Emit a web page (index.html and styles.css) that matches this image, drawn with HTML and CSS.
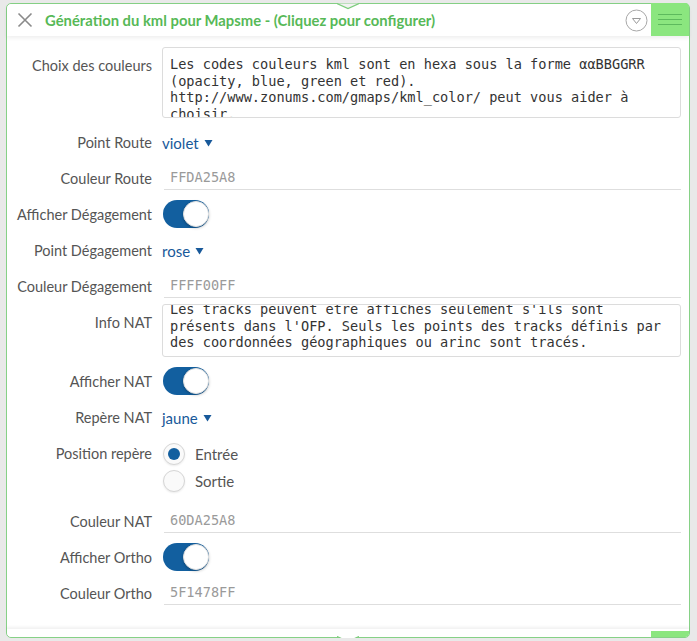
FILE: index.html
```html
<!DOCTYPE html>
<html lang="fr">
<head>
<meta charset="utf-8">
<title>Génération du kml pour Mapsme</title>
<link rel="stylesheet" href="styles.css">
</head>
<body>
<div class="panel">
  <svg class="notch notch-top" width="22" height="10" viewBox="0 0 22 10"><path d="M0 3.5 L11 8.5 L22 3.5" fill="#f2f2f2" stroke="#7ccc7c" stroke-width="1.3"/></svg>
  <header class="head">
    <svg class="close" width="16" height="16" viewBox="0 0 16 16"><path d="M1.5 1.5 L14.5 14.5 M14.5 1.5 L1.5 14.5" stroke="#8a8a8a" stroke-width="1.6" fill="none"/></svg>
    <span class="title">Génération du kml pour Mapsme - (Cliquez pour configurer)</span>
    <svg class="collapse" width="23" height="23" viewBox="0 0 23 23"><circle cx="11.5" cy="11.5" r="10.5" fill="#fff" stroke="#a8a8a8" stroke-width="1"/><path d="M7.5 9.5 L15.5 9.5 L11.5 14.5 Z" fill="none" stroke="#9a9a9a" stroke-width="1"/></svg>
    <div class="menu"><span class="bar"></span><span class="bar"></span><span class="bar"></span></div>
  </header>
  <div class="body">
    <div class="row row-area">
      <div class="label">Choix des couleurs</div>
      <div class="area area-big"><div class="area-text">Les codes couleurs kml sont en hexa sous la forme ααBBGGRR
(opacity, blue, green et red).
http://www.zonums.com/gmaps/kml_color/ peut vous aider à
choisir.</div></div>
    </div>
    <div class="row">
      <div class="label">Point Route</div>
      <div class="select">violet<svg class="caret" width="9" height="8" viewBox="0 0 9 8"><path d="M0.5 1 L8.5 1 L4.5 7.5 Z" fill="#18599a"/></svg></div>
    </div>
    <div class="row">
      <div class="label">Couleur Route</div>
      <div class="input">FFDA25A8</div>
    </div>
    <div class="row">
      <div class="label">Afficher Dégagement</div>
      <div class="toggle"><span class="knob"></span></div>
    </div>
    <div class="row">
      <div class="label">Point Dégagement</div>
      <div class="select">rose<svg class="caret" width="9" height="8" viewBox="0 0 9 8"><path d="M0.5 1 L8.5 1 L4.5 7.5 Z" fill="#18599a"/></svg></div>
    </div>
    <div class="row">
      <div class="label">Couleur Dégagement</div>
      <div class="input">FFFF00FF</div>
    </div>
    <div class="row row-area">
      <div class="label">Info NAT</div>
      <div class="area area-small"><div class="area-text scrolled">Les tracks peuvent être affichés seulement s'ils sont
présents dans l'OFP. Seuls les points des tracks définis par
des coordonnées géographiques ou arinc sont tracés.</div></div>
    </div>
    <div class="row">
      <div class="label">Afficher NAT</div>
      <div class="toggle"><span class="knob"></span></div>
    </div>
    <div class="row">
      <div class="label">Repère NAT</div>
      <div class="select">jaune<svg class="caret" width="9" height="8" viewBox="0 0 9 8"><path d="M0.5 1 L8.5 1 L4.5 7.5 Z" fill="#18599a"/></svg></div>
    </div>
    <div class="row row-radio">
      <div class="label">Position repère</div>
      <div class="radios">
        <div class="radio-item"><span class="radio checked"></span><span class="radio-label">Entrée</span></div>
        <div class="radio-item"><span class="radio"></span><span class="radio-label">Sortie</span></div>
      </div>
    </div>
    <div class="row">
      <div class="label">Couleur NAT</div>
      <div class="input">60DA25A8</div>
    </div>
    <div class="row">
      <div class="label">Afficher Ortho</div>
      <div class="toggle"><span class="knob"></span></div>
    </div>
    <div class="row">
      <div class="label">Couleur Ortho</div>
      <div class="input">5F1478FF</div>
    </div>
  </div>
  <div class="foot"><span class="foot-green"></span></div>
  <svg class="notch notch-bottom" width="22" height="6" viewBox="0 0 22 6"><path d="M0 0.5 L11 5.5 L22 0.5" fill="#ffffff" stroke="#7ccc7c" stroke-width="1.2"/></svg>
</div>
</body>
</html>
```

FILE: styles.css
```css
html, body {
  margin: 0;
  padding: 0;
  background: #e9e9e9;
}

body {
  font-family: "Lato", "Liberation Sans", sans-serif;
  font-size: 14.5px;
  color: #555;
}

.panel {
  position: relative;
  box-sizing: border-box;
  margin: 3px 7px 0 6px;
  height: 635px;
  border: 1px solid #86d186;
  border-radius: 5px;
  background: #fff;
  display: flex;
  flex-direction: column;
}

.notch {
  position: absolute;
  display: block;
  z-index: 3;
}

.notch-top {
  left: 330px;
  top: -4px;
}

.notch-bottom {
  left: 330px;
  bottom: -5px;
}

.head {
  flex: none;
  height: 32px;
  display: flex;
  align-items: center;
  position: relative;
  z-index: 1;
  box-shadow: 0 2px 4px rgba(0, 0, 0, 0.07);
  border-radius: 5px 5px 0 0;
  background: #fff;
}

.close {
  flex: none;
  margin-left: 10px;
}

.title {
  margin-left: 12px;
  font-weight: 700;
  font-size: 14.8px;
  color: #57b957;
  white-space: nowrap;
  flex: 1;
}

.collapse {
  flex: none;
  margin-right: 3px;
  margin-top: 1px;
}

.menu {
  flex: none;
  align-self: stretch;
  width: 38px;
  margin-top: -1px;
  background: #8be67f;
  border-radius: 0 4px 0 0;
  display: flex;
  flex-direction: column;
  justify-content: center;
  align-items: center;
  gap: 4px;
}

.bar {
  display: block;
  width: 24px;
  height: 1px;
  background: #5dba5d;
}

.body {
  flex: 1;
  padding: 11px 8px 0 0;
  overflow: hidden;
}

.row {
  display: flex;
  gap: 10px;
  height: 36px;
}

.row-area {
  height: auto;
  margin-bottom: 6px;
}

.row-radio {
  height: 68px;
}

.label {
  flex: none;
  width: 145px;
  padding-top: 1px;
  text-align: right;
  line-height: 36px;
  white-space: nowrap;
}

.area {
  flex: 1;
  box-sizing: border-box;
  border: 1px solid #dcdcdc;
  border-radius: 3px;
  padding: 8px 7px 0;
  overflow: hidden;
  font-family: "DejaVu Sans Mono", monospace;
  font-size: 13.6px;
  line-height: 16.5px;
  color: #333;
}

.area-big {
  height: 71px;
}

.area-small {
  height: 53px;
  padding-top: 0;
}

.area-text {
  white-space: pre-wrap;
}

.scrolled {
  margin-top: -4px;
}

.select {
  line-height: 36px;
  padding-top: 1px;
  color: #18599a;
  font-size: 15px;
  display: flex;
  align-items: center;
  gap: 5px;
}

.caret {
  display: block;
  margin-top: 1px;
}

.input {
  flex: 1;
  box-sizing: border-box;
  height: 30px;
  margin-left: 2px;
  padding: 6px 0 0 6px;
  line-height: 23px;
  border-bottom: 1px solid #dedede;
  font-family: "DejaVu Sans Mono", monospace;
  font-size: 13.6px;
  color: #9a9a9a;
}

.toggle {
  position: relative;
  flex: none;
  width: 46px;
  height: 28px;
  margin-top: 4px;
  margin-left: 1px;
  border-radius: 14px;
  background: #125f9f;
}

.knob {
  position: absolute;
  right: 0;
  top: 1px;
  width: 26px;
  height: 26px;
  box-sizing: border-box;
  border-radius: 50%;
  background: #fff;
  border: 1px solid #e2e2e2;
  box-shadow: 0 1px 3px rgba(0, 0, 0, 0.25);
}

.radios {
  padding-top: 5px;
}

.radio-item {
  height: 27px;
  display: flex;
  align-items: center;
}

.radio {
  box-sizing: border-box;
  width: 22px;
  height: 22px;
  margin-left: 1px;
  border-radius: 50%;
  border: 1px solid #d6d6d6;
  background: #fafafa;
  box-shadow: 0 1px 2px rgba(0, 0, 0, 0.08);
  display: flex;
  align-items: center;
  justify-content: center;
}

.radio.checked::after {
  content: "";
  width: 12px;
  height: 12px;
  border-radius: 50%;
  background: #125f9f;
}

.radio-label {
  margin-left: 10px;
  font-size: 15px;
}

.foot {
  flex: none;
  height: 8px;
  display: flex;
  justify-content: flex-end;
  box-shadow: 0 -2px 3px rgba(0, 0, 0, 0.06);
  border-radius: 0 0 5px 5px;
  background: #fff;
  position: relative;
}

.foot-green {
  width: 38px;
  height: 6px;
  margin-top: 2px;
  background: #8be67f;
  border-radius: 0 0 4px 0;
}
```
